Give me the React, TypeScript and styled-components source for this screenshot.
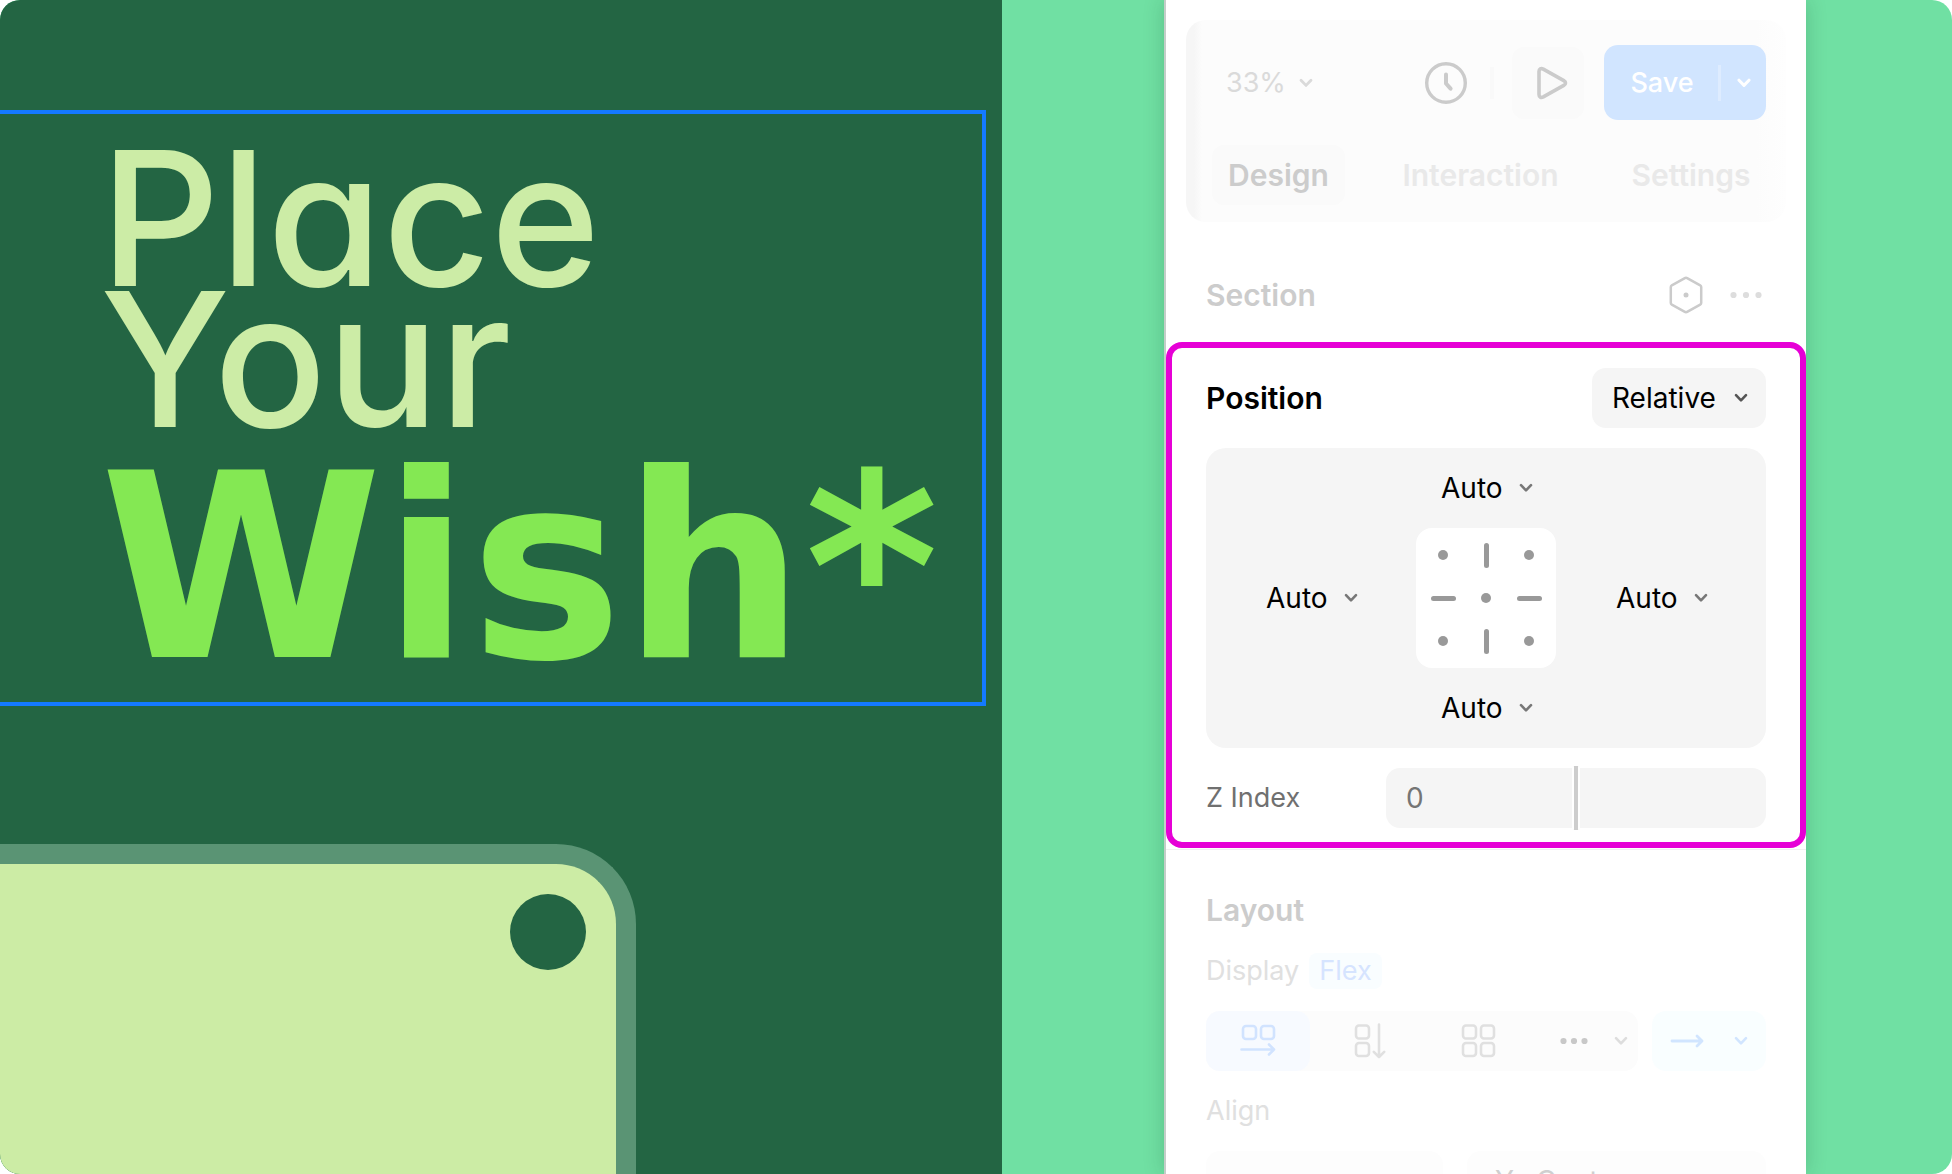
import React from "react";
import styled, { createGlobalStyle, css } from "styled-components";

const GlobalStyle = createGlobalStyle`
  *, *::before, *::after { box-sizing: border-box; }
  body { margin: 0; background: #fff; font-family: Inter, "Liberation Sans", sans-serif; }
  button, input, select { font: inherit; color: inherit; border: 0; margin: 0; padding: 0; background: none; }
  h1, h2, p, fieldset { margin: 0; padding: 0; border: 0; min-width: 0; }
`;

/* ---------- stage ---------- */

const Stage = styled.main`
  display: flex;
  height: 100vh;
  overflow: hidden;
  border-radius: 20px;
  background: #70e0a3;
`;

const Canvas = styled.section`
  flex: 1;
  min-width: 0;
  display: flex;
  flex-direction: column;
  gap: 138px;
  padding-top: 110px;
  overflow: hidden;
  background: #236543;
`;

const Selection = styled.div`
  flex: none;
  margin-right: 16px;
  padding: 34px 0 6px 100px;
  border: 4px solid #147aff;
  border-left: 0;
`;

const Headline = styled.h1`
  font-family: Inter, "Open Sans", sans-serif;
  font-feature-settings: "cv11";
  font-size: 187px;
  line-height: 141px;
  font-weight: 500;
  color: #cceca6;
  white-space: nowrap;
`;

const HeadLine = styled.span`
  display: block;
`;

const Accent = styled(HeadLine)`
  margin-top: 10px;
  font-family: "DejaVu Sans", sans-serif;
  font-size: 256px;
  line-height: 256px;
  font-weight: 700;
  color: #84e853;
`;

const PhotoCard = styled.div`
  flex: 1;
  display: flex;
  justify-content: flex-end;
  width: 636px;
  padding: 30px;
  border: solid #5a9474;
  border-width: 20px 20px 0 0;
  border-top-right-radius: 80px;
  background: #cceca5;
`;

const PhotoDot = styled.span`
  width: 76px;
  height: 76px;
  border-radius: 50%;
  background: #236543;
`;

/* ---------- inspector ---------- */

const Inspector = styled.aside`
  flex: none;
  display: flex;
  flex-direction: column;
  width: 642px;
  margin: 0 146px 0 162px;
  border-left: 2px solid #c4cdc8;
  background: #fff;
  box-shadow: 0 0 20px rgba(0, 60, 30, 0.2);
  font-size: 28px;
  line-height: 36px;
  color: #000;
`;

const Toolbar = styled.header`
  flex: none;
  display: flex;
  flex-direction: column;
  gap: 25px;
  margin: 20px 20px 0;
  padding: 25px 20px 17px 26px;
  border-radius: 20px;
  background: linear-gradient(90deg, #f6f6f6 8px, #fcfcfc 16px, #fcfcfc 95%, #fefefe);
  font-size: 27px;
`;

const ToolRow = styled.div`
  display: flex;
  align-items: center;
  height: 75px;
`;

const SelectBox = styled.label<{ $gap?: number }>`
  display: inline-grid;
  grid-template-columns: auto 14px;
  column-gap: ${(p) => p.$gap ?? 18}px;
  align-items: center;

  select {
    grid-area: 1 / 1 / 2 / 3;
    width: 100%;
    appearance: none;
    outline: none;
    padding-right: ${(p) => (p.$gap ?? 18) + 14}px;
  }
  svg {
    grid-area: 1 / 2;
    pointer-events: none;
  }
`;

const Zoom = styled.div`
  flex: 1;
  padding-left: 14px;
  color: #dadada;
`;

const IconButton = styled.button<{ $width: number; $tint?: string }>`
  display: flex;
  align-items: center;
  justify-content: center;
  flex: none;
  width: ${(p) => p.$width}px;
  height: 72px;
  border-radius: 12px;
  background: ${(p) => p.$tint ?? "none"};
  color: #cbcbcb;
`;

const ToolDivider = styled.span`
  width: 4px;
  height: 32px;
  margin: 0 18px 0 22px;
  background: #f9f9f9;
`;

const SaveGroup = styled.div`
  display: flex;
  align-items: center;
  width: 162px;
  height: 75px;
  margin-left: 20px;
  border-radius: 14px;
  background: #d1e5ff;
  color: #fff;
  font-weight: 500;
`;

const SaveButton = styled.button`
  flex: 1;
  height: 100%;
  padding-left: 2px;
  border-radius: 14px 0 0 14px;
`;

const SaveMore = styled.button`
  display: flex;
  align-items: center;
  justify-content: center;
  width: 48px;
  height: 36px;
  border-left: 3px solid #deecff;
`;

const Tabs = styled.nav`
  display: grid;
  grid-template-columns: 133px 1fr 150px;
`;

const Tab = styled.button<{ $active?: boolean }>`
  height: 60px;
  border-radius: 12px;
  font-size: 30px;
  font-weight: 600;
  background: ${(p) => (p.$active ? "#fafafa" : "none")};
  color: ${(p) => (p.$active ? "#cccccc" : "#e9e9e9")};
`;

const SectionRow = styled.div`
  flex: none;
  display: flex;
  align-items: center;
  justify-content: space-between;
  height: 120px;
  padding: 26px 40px 0;
`;

const SectionActions = styled.div`
  display: flex;
  align-items: center;
  gap: 26px;
  padding-right: 4px;
`;

const PlainButton = styled.button<{ $color: string }>`
  display: flex;
  align-items: center;
  color: ${(p) => p.$color};
`;

const Title = styled.h2<{ $muted?: boolean }>`
  font-size: 30px;
  line-height: 60px;
  font-weight: 600;
  color: ${(p) => (p.$muted ? "#cccccc" : "#000")};
`;

const PositionPanel = styled.section`
  flex: none;
  display: flex;
  flex-direction: column;
  gap: 20px;
  padding: 20px 34px 14px;
  border: 6px solid #e600d6;
  border-radius: 16px;
`;

const Row = styled.div`
  display: flex;
  align-items: center;
  justify-content: space-between;
`;

const TypeField = styled.div`
  display: flex;
  align-items: center;
  height: 60px;
  padding: 0 18px 0 20px;
  border-radius: 14px;
  background: #f5f5f5;
`;

const PinsBox = styled.div`
  display: grid;
  grid-template-columns: 1fr 140px 1fr;
  grid-template-rows: 1fr 140px 1fr;
  align-items: center;
  justify-items: center;
  height: 300px;
  border-radius: 20px;
  background: #f5f5f5;
`;

const PinSlot = styled.div<{ $col: number; $row: number }>`
  grid-area: ${(p) => p.$row} / ${(p) => p.$col};
  display: flex;
  padding-left: 2px;
`;

const PinGrid = styled.fieldset`
  grid-area: 2 / 2;
  display: grid;
  grid-template-columns: repeat(3, 43px);
  grid-template-rows: repeat(3, 43px);
  place-content: center;
  width: 140px;
  height: 140px;
  border-radius: 16px;
  background: #fff;
`;

type MarkShape = "dot" | "tall" | "wide";

const markSize = {
  dot: css`width: 10px; height: 10px;`,
  tall: css`width: 5px; height: 25px;`,
  wide: css`width: 25px; height: 5px;`,
};

const Pin = styled.button<{ $shape: MarkShape }>`
  display: flex;
  align-items: center;
  justify-content: center;

  &::before {
    content: "";
    border-radius: 5px;
    background: #999;
    ${(p) => markSize[p.$shape]}
  }
`;

const FieldLabel = styled.label`
  font-size: 27px;
  color: #707070;
`;

const Stepper = styled.div`
  display: flex;
  align-items: center;
  width: 380px;
  height: 60px;
  border-radius: 14px;
  background: #f5f5f5;
`;

const NumberInput = styled.input`
  flex: none;
  width: 186px;
  height: 60px;
  padding-left: 20px;
  outline: none;
  color: #757575;
`;

const StepperDivider = styled.span`
  width: 8px;
  height: 64px;
  border: solid #fff;
  border-width: 0 2px;
  border-radius: 2px;
  background: #cdcdcd;
`;

const LayoutPanel = styled.section`
  flex: none;
  display: flex;
  flex-direction: column;
  margin-top: 1px;
  padding: 30px 40px 0;
  border-top: 1px solid #f1f1f1;
`;

const DisplayRow = styled.div`
  display: flex;
  align-items: center;
  gap: 10px;
  height: 61px;
  margin-bottom: 10px;
  font-size: 27px;
  color: #e0e0e0;
`;

const FlexTag = styled.span`
  padding: 0 10px;
  border-radius: 8px;
  background: #f9fdff;
  color: #d6e4ff;
`;

const LayoutRow = styled.div`
  display: flex;
  gap: 14px;
  height: 60px;
`;

const Segments = styled.div`
  flex: 1;
  display: grid;
  grid-template-columns: 104px 120px 97px 1fr;
  border-radius: 14px;
  background: #fcfcfc;
`;

const Segment = styled.button<{ $active?: boolean }>`
  display: flex;
  align-items: center;
  justify-content: center;
  border-radius: 14px;
  background: ${(p) => (p.$active ? "#f7faff" : "none")};
  color: ${(p) => (p.$active ? "#d1e3ff" : "#e0e0e0")};
`;

const MoreSegment = styled(Segment)`
  justify-content: space-between;
  padding: 0 10px 0 33px;
`;

const DirectionButton = styled.button`
  display: flex;
  align-items: center;
  justify-content: space-between;
  width: 114px;
  padding: 0 18px;
  border-radius: 14px;
  background: #f9feff;
  color: #d1e5ff;
`;

const AlignLabel = styled.p`
  font-size: 27px;
  line-height: 80px;
  color: #e0e0e0;
`;

const AlignRow = styled.div`
  display: grid;
  grid-template-columns: 237px 1fr;
  gap: 24px;
`;

const AlignField = styled.div`
  display: flex;
  align-items: center;
  gap: 22px;
  height: 60px;
  padding: 0 20px 0 28px;
  border-radius: 14px;
  background: #fdfdfd;
  color: #cfcfcf;
`;

/* ---------- icons ---------- */

const line = {
  fill: "none",
  stroke: "currentColor",
  strokeLinecap: "round" as const,
  strokeLinejoin: "round" as const,
};

const Chevron = ({ color = "currentColor", weight = 2.6 }: { color?: string; weight?: number }) => (
  <svg width="14" height="10" viewBox="0 0 14 10" {...line} stroke={color} strokeWidth={weight} aria-hidden="true">
    <path d="M2 2.2 7 7.4l5-5.2" />
  </svg>
);

const ClockIcon = () => (
  <svg width="44" height="44" viewBox="0 0 44 44" {...line} strokeWidth="3.4" aria-hidden="true">
    <circle cx="22" cy="22" r="19.3" />
    <path d="M22 13.5v9l4.6 5.2" strokeWidth="4" />
  </svg>
);

const PlayIcon = () => (
  <svg width="40" height="36" viewBox="-7.5 0 40 36" {...line} strokeWidth="3.6" aria-hidden="true">
    <path d="M3.5 6.5v23c0 2.6 2 3.6 4.3 2.4l20.5-11.5c2.3-1.3 2.3-3.5 0-4.8L7.8 4.1C5.5 2.9 3.5 3.9 3.5 6.5Z" />
  </svg>
);

const HexIcon = () => (
  <svg width="36" height="40" viewBox="0 0 36 40" {...line} strokeWidth="2.5" aria-hidden="true">
    <path d="M16.4 3.3 3.8 10.3Q2.8 10.9 2.8 12v16q0 1.1 1 1.7l12.6 7q1.6 .9 3.2 0l12.6-7q1-.6 1-1.7V12q0-1.1-1-1.7l-12.6-7q-1.6-.9-3.2 0Z" />
    <circle cx="18" cy="20" r="2.5" fill="currentColor" stroke="none" />
  </svg>
);

const DotsIcon = ({ pitch }: { pitch: number }) => (
  <svg width={pitch * 2 + 7} height="8" viewBox={`0 0 ${pitch * 2 + 7} 8`} fill="currentColor" aria-hidden="true">
    {[0, 1, 2].map((i) => (
      <circle key={i} cx={3.5 + i * pitch} cy="4" r="3.1" />
    ))}
  </svg>
);

const RowIcon = () => (
  <svg width="36" height="34" viewBox="0 0 36 34" {...line} strokeWidth="2.6" aria-hidden="true">
    <rect x="3" y="2" width="13" height="13" rx="3" />
    <rect x="21" y="2" width="13" height="13" rx="3" />
    <path d="M1.5 25.5H34M29 20.5l5 5-5 5" />
  </svg>
);

const ColumnIcon = () => (
  <svg width="32" height="36" viewBox="0 0 32 36" {...line} strokeWidth="2.6" aria-hidden="true">
    <rect x="2" y="2.5" width="13" height="13" rx="3" />
    <rect x="2" y="20" width="13" height="13" rx="3" />
    <path d="M25 1.5V34M19.8 28.8 25 34l5.2-5.2" />
  </svg>
);

const GridIcon = () => (
  <svg width="35" height="36" viewBox="0 0 35 36" {...line} strokeWidth="2.6" aria-hidden="true">
    <rect x="2" y="2.5" width="13" height="13" rx="3" />
    <rect x="20" y="2.5" width="13" height="13" rx="3" />
    <rect x="2" y="20" width="13" height="13" rx="3" />
    <rect x="20" y="20" width="13" height="13" rx="3" />
  </svg>
);

const ArrowIcon = () => (
  <svg width="34" height="14" viewBox="0 0 34 14" {...line} strokeWidth="2.8" aria-hidden="true">
    <path d="M2 7h30M27 2l5 5-5 5" />
  </svg>
);

/* ---------- pieces ---------- */

type DropdownProps = { label: string; options: string[]; gap?: number; chevron?: string; weight?: number };

const Dropdown = ({ label, options, gap, chevron, weight }: DropdownProps) => (
  <SelectBox $gap={gap}>
    <select aria-label={label}>
      {options.map((o) => (
        <option key={o}>{o}</option>
      ))}
    </select>
    <Chevron color={chevron} weight={weight} />
  </SelectBox>
);

const pins: { name: string; shape: MarkShape }[] = [
  { name: "Top left", shape: "dot" },
  { name: "Top", shape: "tall" },
  { name: "Top right", shape: "dot" },
  { name: "Left", shape: "wide" },
  { name: "Center", shape: "dot" },
  { name: "Right", shape: "wide" },
  { name: "Bottom left", shape: "dot" },
  { name: "Bottom", shape: "tall" },
  { name: "Bottom right", shape: "dot" },
];

const sides = [
  { name: "Top", col: 2, row: 1 },
  { name: "Left", col: 1, row: 2 },
  { name: "Right", col: 3, row: 2 },
  { name: "Bottom", col: 2, row: 3 },
];

export default function App() {
  return (
    <>
      <GlobalStyle />
      <Stage>
        <Canvas>
          <Selection>
            <Headline>
              <HeadLine>Place</HeadLine>
              <HeadLine>Your</HeadLine>
              <Accent>Wish*</Accent>
            </Headline>
          </Selection>
          <PhotoCard>
            <PhotoDot />
          </PhotoCard>
        </Canvas>

        <Inspector>
          <Toolbar>
            <ToolRow>
              <Zoom>
                <Dropdown label="Zoom" options={["33%"]} gap={13} weight={2.8} />
              </Zoom>
              <IconButton $width={44} aria-label="History">
                <ClockIcon />
              </IconButton>
              <ToolDivider />
              <IconButton $width={72} $tint="#fafafa" aria-label="Preview">
                <PlayIcon />
              </IconButton>
              <SaveGroup>
                <SaveButton>Save</SaveButton>
                <SaveMore aria-label="Save options">
                  <Chevron weight={3} />
                </SaveMore>
              </SaveGroup>
            </ToolRow>
            <Tabs>
              <Tab $active>Design</Tab>
              <Tab>Interaction</Tab>
              <Tab>Settings</Tab>
            </Tabs>
          </Toolbar>

          <SectionRow>
            <Title $muted>Section</Title>
            <SectionActions>
              <PlainButton $color="#cbcbcb" aria-label="Component">
                <HexIcon />
              </PlainButton>
              <PlainButton $color="#dddddd" aria-label="More">
                <DotsIcon pitch={12.5} />
              </PlainButton>
            </SectionActions>
          </SectionRow>

          <PositionPanel>
            <Row>
              <Title>Position</Title>
              <TypeField>
                <Dropdown label="Position type" options={["Relative"]} chevron="#555" />
              </TypeField>
            </Row>
            <PinsBox>
              {sides.map((s) => (
                <PinSlot key={s.name} $col={s.col} $row={s.row}>
                  <Dropdown label={s.name} options={["Auto"]} gap={16} chevron="#777" />
                </PinSlot>
              ))}
              <PinGrid aria-label="Pins">
                {pins.map((p) => (
                  <Pin key={p.name} $shape={p.shape} aria-label={p.name} />
                ))}
              </PinGrid>
            </PinsBox>
            <Row>
              <FieldLabel htmlFor="z-index">Z Index</FieldLabel>
              <Stepper>
                <NumberInput id="z-index" defaultValue="0" inputMode="numeric" />
                <StepperDivider />
              </Stepper>
            </Row>
          </PositionPanel>

          <LayoutPanel>
            <Title $muted>Layout</Title>
            <DisplayRow>
              Display <FlexTag>Flex</FlexTag>
            </DisplayRow>
            <LayoutRow>
              <Segments>
                <Segment $active aria-label="Row">
                  <RowIcon />
                </Segment>
                <Segment aria-label="Column">
                  <ColumnIcon />
                </Segment>
                <Segment aria-label="Grid">
                  <GridIcon />
                </Segment>
                <MoreSegment aria-label="More layouts">
                  <PlainButton as="span" $color="#c8c8c8">
                    <DotsIcon pitch={10.5} />
                  </PlainButton>
                  <Chevron color="#dddddd" />
                </MoreSegment>
              </Segments>
              <DirectionButton aria-label="Direction">
                <ArrowIcon />
                <Chevron />
              </DirectionButton>
            </LayoutRow>
            <AlignLabel>Align</AlignLabel>
            <AlignRow>
              <AlignField />
              <AlignField>
                <span>Y</span>
                <Dropdown label="Align Y" options={["Center"]} />
              </AlignField>
            </AlignRow>
          </LayoutPanel>
        </Inspector>
      </Stage>
    </>
  );
}
